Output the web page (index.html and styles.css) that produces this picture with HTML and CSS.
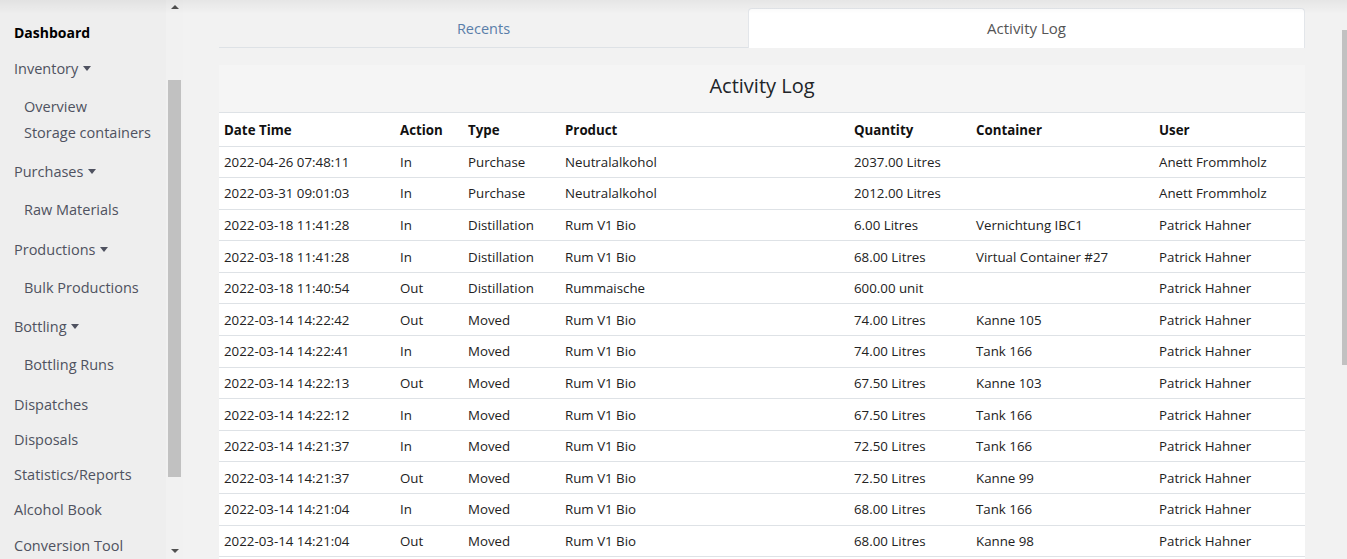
FILE: index.html
```html
<!DOCTYPE html>
<html>
<head>
<meta charset="utf-8">
<link rel="stylesheet" href="styles.css">
</head>
<body>
<div class="app">
  <aside class="sidebar">
    <nav class="nav">
      <a class="nav-top active">Dashboard</a>
      <a class="nav-top">Inventory <span class="caret"></span></a>
      <div class="sub">
        <a>Overview</a>
        <a>Storage containers</a>
      </div>
      <a class="nav-top">Purchases <span class="caret"></span></a>
      <div class="sub"><a>Raw Materials</a></div>
      <a class="nav-top">Productions <span class="caret"></span></a>
      <div class="sub"><a>Bulk Productions</a></div>
      <a class="nav-top">Bottling <span class="caret"></span></a>
      <div class="sub"><a>Bottling Runs</a></div>
      <a class="nav-top plain">Dispatches</a>
      <a class="nav-top plain">Disposals</a>
      <a class="nav-top plain">Statistics/Reports</a>
      <a class="nav-top plain">Alcohol Book</a>
      <a class="nav-top plain">Conversion Tool</a>
    </nav>
    <div class="sb-track">
      <span class="sb-arrow up"></span>
      <div class="sb-space"><div class="sb-thumb"></div></div>
      <span class="sb-arrow down"></span>
    </div>
  </aside>
  <main class="main">
    <div class="tabs">
      <div class="tab">Recents</div>
      <div class="tab active">Activity Log</div>
    </div>
    <section class="panel">
      <h2 class="panel-title">Activity Log</h2>
      <table class="log">
        <thead>
          <tr><th class="c-date">Date Time</th><th class="c-act">Action</th><th class="c-type">Type</th><th class="c-prod">Product</th><th class="c-qty">Quantity</th><th class="c-cont">Container</th><th>User</th></tr>
        </thead>
        <tbody>
          <tr><td>2022-04-26 07:48:11</td><td>In</td><td>Purchase</td><td>Neutralalkohol</td><td>2037.00 Litres</td><td></td><td>Anett Frommholz</td></tr>
          <tr><td>2022-03-31 09:01:03</td><td>In</td><td>Purchase</td><td>Neutralalkohol</td><td>2012.00 Litres</td><td></td><td>Anett Frommholz</td></tr>
          <tr><td>2022-03-18 11:41:28</td><td>In</td><td>Distillation</td><td>Rum V1 Bio</td><td>6.00 Litres</td><td>Vernichtung IBC1</td><td>Patrick Hahner</td></tr>
          <tr><td>2022-03-18 11:41:28</td><td>In</td><td>Distillation</td><td>Rum V1 Bio</td><td>68.00 Litres</td><td>Virtual Container #27</td><td>Patrick Hahner</td></tr>
          <tr><td>2022-03-18 11:40:54</td><td>Out</td><td>Distillation</td><td>Rummaische</td><td>600.00 unit</td><td></td><td>Patrick Hahner</td></tr>
          <tr><td>2022-03-14 14:22:42</td><td>Out</td><td>Moved</td><td>Rum V1 Bio</td><td>74.00 Litres</td><td>Kanne 105</td><td>Patrick Hahner</td></tr>
          <tr><td>2022-03-14 14:22:41</td><td>In</td><td>Moved</td><td>Rum V1 Bio</td><td>74.00 Litres</td><td>Tank 166</td><td>Patrick Hahner</td></tr>
          <tr><td>2022-03-14 14:22:13</td><td>Out</td><td>Moved</td><td>Rum V1 Bio</td><td>67.50 Litres</td><td>Kanne 103</td><td>Patrick Hahner</td></tr>
          <tr><td>2022-03-14 14:22:12</td><td>In</td><td>Moved</td><td>Rum V1 Bio</td><td>67.50 Litres</td><td>Tank 166</td><td>Patrick Hahner</td></tr>
          <tr><td>2022-03-14 14:21:37</td><td>In</td><td>Moved</td><td>Rum V1 Bio</td><td>72.50 Litres</td><td>Tank 166</td><td>Patrick Hahner</td></tr>
          <tr><td>2022-03-14 14:21:37</td><td>Out</td><td>Moved</td><td>Rum V1 Bio</td><td>72.50 Litres</td><td>Kanne 99</td><td>Patrick Hahner</td></tr>
          <tr><td>2022-03-14 14:21:04</td><td>In</td><td>Moved</td><td>Rum V1 Bio</td><td>68.00 Litres</td><td>Tank 166</td><td>Patrick Hahner</td></tr>
          <tr><td>2022-03-14 14:21:04</td><td>Out</td><td>Moved</td><td>Rum V1 Bio</td><td>68.00 Litres</td><td>Kanne 98</td><td>Patrick Hahner</td></tr>
          <tr class="tail"><td colspan="7"></td></tr>
        </tbody>
      </table>
    </section>
  </main>
  <div class="page-sb"><div class="page-thumb"></div></div>
</div>
</body>
</html>
```

FILE: styles.css
```css
* { box-sizing: border-box; }
html, body {
  margin: 0;
  height: 559px;
  overflow: hidden;
}
body {
  font-family: "Open Sans", "Noto Sans", sans-serif;
  color: #212529;
  background: #f2f2f2;
}
.app {
  position: relative;
  display: flex;
  height: 559px;
  overflow: hidden;
}
.app::before {
  content: "";
  position: absolute;
  left: 0; right: 0; top: 0;
  height: 14px;
  background: linear-gradient(rgba(0,0,0,0.05), rgba(0,0,0,0));
  pointer-events: none;
  z-index: 5;
}
/* Sidebar */
.sidebar {
  width: 183px;
  flex: none;
  display: flex;
  background: #eeeeee;
}
.nav {
  width: 166px;
  flex: none;
  display: flex;
  flex-direction: column;
  padding: 23px 0 0 14px;
  font-size: 14.5px;
  color: #4f5260;
  white-space: nowrap;
}
.nav a { display: block; }
.nav-top {
  height: 20px;
  line-height: 20px;
  margin-bottom: 16px;
}
.nav-top.active {
  font-weight: 700;
  font-size: 14px;
  color: #000;
}
.nav-top.plain { margin-bottom: 15.3px; }
.caret {
  display: inline-block;
  width: 0; height: 0;
  border-left: 4.5px solid transparent;
  border-right: 4.5px solid transparent;
  border-top: 5px solid #4f5260;
  vertical-align: 3px;
  margin-left: 1px;
}
.sub {
  padding-left: 10px;
  margin-top: 2px;
  margin-bottom: 19.4px;
  display: flex;
  flex-direction: column;
  gap: 6px;
}
.sub a { height: 20px; line-height: 20px; }
.sb-track {
  width: 17px;
  flex: none;
  background: #f1f1f1;
  display: flex;
  flex-direction: column;
  align-items: center;
}
.sb-arrow {
  width: 0; height: 0;
  border-left: 4px solid transparent;
  border-right: 4px solid transparent;
  flex: none;
}
.sb-arrow.up { border-bottom: 4px solid #505050; margin-top: 5px; }
.sb-arrow.down { border-top: 4px solid #505050; margin-bottom: 6px; }
.sb-space { flex: 1; width: 100%; padding: 71px 2px 0; }
.sb-thumb { width: 13px; height: 397px; background: #c1c1c1; }

/* Main */
.main {
  flex: 1;
  padding: 8px 35px 0 36px;
  min-width: 0;
}
.tabs {
  display: flex;
  height: 40px;
}
.tab {
  flex: 0 0 529px;
  text-align: center;
  line-height: 41px;
  font-size: 14.5px;
  color: #5a7ea9;
  border-bottom: 1px solid #dee2e6;
}
.tab.active {
  flex: 1;
  background: #fff;
  color: #555;
  border: 1px solid #e3e6ea;
  border-bottom: none;
  border-radius: 4px 4px 0 0;
  font-size: 15px;
  line-height: 39px;
}
.panel {
  margin-top: 17px;
  background: #fff;
  border-radius: 3px 3px 0 0;
}
.panel-title {
  margin: 0;
  height: 48px;
  line-height: 42px;
  text-align: center;
  font-size: 20px;
  font-weight: 400;
  color: #212529;
  background: #f5f5f5;
  border-bottom: 1px solid #dee2e6;
}
.log {
  width: 100%;
  border-collapse: collapse;
  font-size: 13.3px;
  color: #222;
}
.log th {
  text-align: left;
  font-weight: 700;
  height: 33px;
  padding: 2px 5px 0;
  color: #111;
}
.log td {
  height: 31.6px;
  padding: 0 5px;
  border-top: 1px solid #dee2e6;
  white-space: nowrap;
}
.log .tail td { height: 10px; }
.c-date { width: 176px; }
.c-act { width: 68px; }
.c-type { width: 97px; }
.c-prod { width: 289px; }
.c-qty { width: 122px; }
.c-cont { width: 183px; }

/* Page scrollbar */
.page-sb {
  width: 7px;
  flex: none;
  background: #f1f1f1;
  padding: 30px 0 0 2px;
}
.page-thumb { width: 5px; height: 335px; background: #c1c1c1; }
```
